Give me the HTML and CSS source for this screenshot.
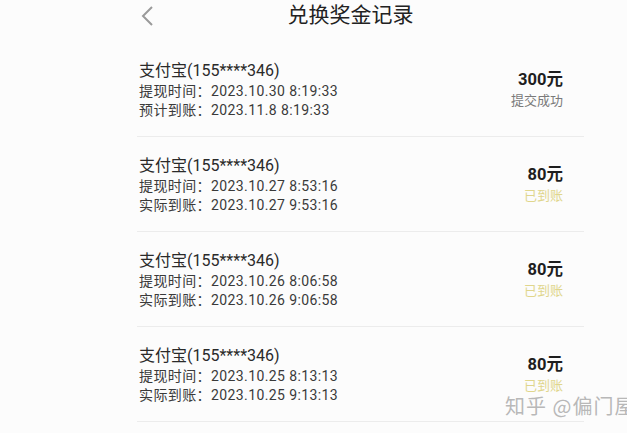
FILE: index.html
```html
<!DOCTYPE html>
<html lang="zh-CN">
<head>
    <meta charset="UTF-8">
    <meta name="viewport" content="width=device-width, initial-scale=1.0">
    <title>兑换奖金记录</title>
    <link rel="stylesheet" href="styles.css">
</head>
<body>
    <div class="page">
        <header class="top-bar">
            <svg class="back" viewBox="0 0 14 22" xmlns="http://www.w3.org/2000/svg">
                <path d="M12 2L3 11l9 9"/>
            </svg>
            <h1 class="title">兑换奖金记录</h1>
        </header>

        <ul class="records">
            <li class="record">
                <div class="info">
                    <p class="account">支付宝(155****346)</p>
                    <p class="line">提现时间：2023.10.30 8:19:33</p>
                    <p class="line">预计到账：2023.11.8 8:19:33</p>
                </div>
                <div class="amount">
                    <p class="money">300元</p>
                    <p class="status">提交成功</p>
                </div>
            </li>
            <li class="record">
                <div class="info">
                    <p class="account">支付宝(155****346)</p>
                    <p class="line">提现时间：2023.10.27 8:53:16</p>
                    <p class="line">实际到账：2023.10.27 9:53:16</p>
                </div>
                <div class="amount">
                    <p class="money">80元</p>
                    <p class="status done">已到账</p>
                </div>
            </li>
            <li class="record">
                <div class="info">
                    <p class="account">支付宝(155****346)</p>
                    <p class="line">提现时间：2023.10.26 8:06:58</p>
                    <p class="line">实际到账：2023.10.26 9:06:58</p>
                </div>
                <div class="amount">
                    <p class="money">80元</p>
                    <p class="status done">已到账</p>
                </div>
            </li>
            <li class="record">
                <div class="info">
                    <p class="account">支付宝(155****346)</p>
                    <p class="line">提现时间：2023.10.25 8:13:13</p>
                    <p class="line">实际到账：2023.10.25 9:13:13</p>
                </div>
                <div class="amount">
                    <p class="money">80元</p>
                    <p class="status done">已到账</p>
                </div>
            </li>
        </ul>
    </div>

    <div class="watermark">知乎 @偏门屋</div>
</body>
</html>
```

FILE: styles.css
```css
body {
    margin: 0;
    padding: 0;
    background-color: #fcfcfc;
    font-family: Roboto, "Noto Sans CJK SC", sans-serif;
    color: #2b2b2b;
    overflow: hidden;
    height: 433px;
    position: relative;
}

p {
    margin: 0;
}

.page {
    width: 447px;
    margin-left: 137px;
}

.top-bar {
    height: 42px;
    display: flex;
    align-items: flex-start;
    position: relative;
}

.back {
    position: absolute;
    left: 3px;
    top: 5px;
    width: 14px;
    height: 22px;
    fill: none;
    stroke: #9a9a9a;
    stroke-width: 2;
}

.title {
    flex: 1;
    margin: 0;
    padding-right: 20px;
    text-align: center;
    font-size: 21px;
    font-weight: normal;
    line-height: 30px;
    color: #222;
}

.records {
    list-style: none;
    margin: 0;
    padding: 0;
}

.record {
    display: flex;
    justify-content: space-between;
    align-items: center;
    padding: 18px 21px 16px 2px;
    border-bottom: 1px solid #ececec;
}

.account {
    font-size: 16px;
    line-height: 22px;
    color: #2a2a2a;
}

.line {
    font-size: 14px;
    line-height: 19px;
    letter-spacing: 0.4px;
    color: #3a3a3a;
}

.amount {
    text-align: right;
    margin-top: 0;
}

.money {
    font-size: 16.5px;
    font-weight: bold;
    line-height: 21px;
    color: #1e1e1e;
}

.status {
    font-size: 13px;
    line-height: 22px;
    color: #7a7a7a;
}

.status.done {
    color: #e0d68c;
}

.watermark {
    position: absolute;
    left: 505px;
    top: 393px;
    font-family: "Noto Sans CJK SC", sans-serif;
    font-size: 20px;
    line-height: 26px;
    letter-spacing: 1px;
    white-space: nowrap;
    color: #b8b8b8;
    text-shadow: 0 0 2px #fff;
}
```
